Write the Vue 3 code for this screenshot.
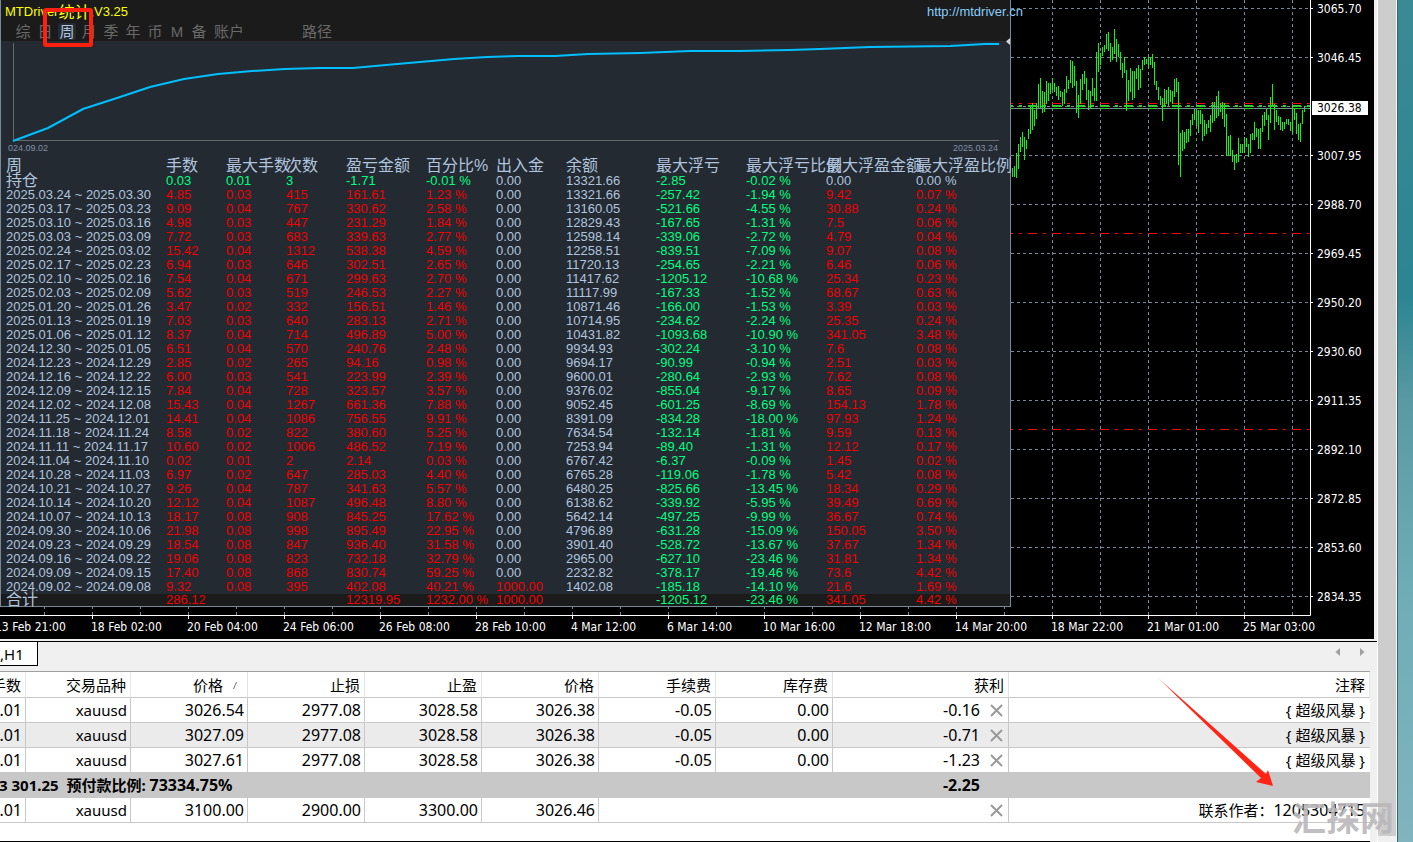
<script setup>
const periods = [
  { key: 'all', label: '综' },
  { key: 'day', label: '日' },
  { key: 'week', label: '周', active: true },
  { key: 'month', label: '月' },
  { key: 'season', label: '季' },
  { key: 'year', label: '年' },
  { key: 'symbol', label: '币' },
  { key: 'magic', label: 'M' },
  { key: 'note', label: '备' },
  { key: 'account', label: '账户', wide: true },
  { key: 'path', label: '路径', wide: true, apart: true },
]

const statHeads = ['周', '手数', '最大手数', '次数', '盈亏金额', '百分比%', '出入金', '余额', '最大浮亏', '最大浮亏比例', '最大浮盈金额', '最大浮盈比例']

const rawStats = `2025.03.24 ~ 2025.03.30|4.85|0.03|415|161.61|1.23 %|0.00|13321.66|-257.42|-1.94 %|9.42|0.07 %
2025.03.17 ~ 2025.03.23|9.09|0.04|767|330.62|2.58 %|0.00|13160.05|-521.66|-4.55 %|30.88|0.24 %
2025.03.10 ~ 2025.03.16|4.98|0.03|447|231.29|1.84 %|0.00|12829.43|-167.65|-1.31 %|7.5|0.06 %
2025.03.03 ~ 2025.03.09|7.72|0.03|683|339.63|2.77 %|0.00|12598.14|-339.06|-2.72 %|4.79|0.04 %
2025.02.24 ~ 2025.03.02|15.42|0.04|1312|538.38|4.59 %|0.00|12258.51|-839.51|-7.09 %|9.07|0.08 %
2025.02.17 ~ 2025.02.23|6.94|0.03|646|302.51|2.65 %|0.00|11720.13|-254.65|-2.21 %|6.46|0.06 %
2025.02.10 ~ 2025.02.16|7.54|0.04|671|299.63|2.70 %|0.00|11417.62|-1205.12|-10.68 %|25.34|0.23 %
2025.02.03 ~ 2025.02.09|5.62|0.03|519|246.53|2.27 %|0.00|11117.99|-167.33|-1.52 %|68.67|0.63 %
2025.01.20 ~ 2025.01.26|3.47|0.02|332|156.51|1.46 %|0.00|10871.46|-166.00|-1.53 %|3.39|0.03 %
2025.01.13 ~ 2025.01.19|7.03|0.03|640|283.13|2.71 %|0.00|10714.95|-234.62|-2.24 %|25.35|0.24 %
2025.01.06 ~ 2025.01.12|8.37|0.04|714|496.89|5.00 %|0.00|10431.82|-1093.68|-10.90 %|341.05|3.48 %
2024.12.30 ~ 2025.01.05|6.51|0.04|570|240.76|2.48 %|0.00|9934.93|-302.24|-3.10 %|7.6|0.08 %
2024.12.23 ~ 2024.12.29|2.85|0.02|265|94.16|0.98 %|0.00|9694.17|-90.99|-0.94 %|2.51|0.03 %
2024.12.16 ~ 2024.12.22|6.00|0.03|541|223.99|2.39 %|0.00|9600.01|-280.64|-2.93 %|7.62|0.08 %
2024.12.09 ~ 2024.12.15|7.84|0.04|728|323.57|3.57 %|0.00|9376.02|-855.04|-9.17 %|8.65|0.09 %
2024.12.02 ~ 2024.12.08|15.43|0.04|1267|661.36|7.88 %|0.00|9052.45|-601.25|-8.69 %|154.13|1.78 %
2024.11.25 ~ 2024.12.01|14.41|0.04|1086|756.55|9.91 %|0.00|8391.09|-834.28|-18.00 %|97.93|1.24 %
2024.11.18 ~ 2024.11.24|8.58|0.02|822|380.60|5.25 %|0.00|7634.54|-132.14|-1.81 %|9.59|0.13 %
2024.11.11 ~ 2024.11.17|10.60|0.02|1006|486.52|7.19 %|0.00|7253.94|-89.40|-1.31 %|12.12|0.17 %
2024.11.04 ~ 2024.11.10|0.02|0.01|2|2.14|0.03 %|0.00|6767.42|-6.37|-0.09 %|1.45|0.02 %
2024.10.28 ~ 2024.11.03|6.97|0.02|647|285.03|4.40 %|0.00|6765.28|-119.06|-1.78 %|5.42|0.08 %
2024.10.21 ~ 2024.10.27|9.26|0.04|787|341.63|5.57 %|0.00|6480.25|-825.66|-13.45 %|18.34|0.29 %
2024.10.14 ~ 2024.10.20|12.12|0.04|1087|496.48|8.80 %|0.00|6138.62|-339.92|-5.95 %|39.49|0.69 %
2024.10.07 ~ 2024.10.13|18.17|0.08|908|845.25|17.62 %|0.00|5642.14|-497.25|-9.99 %|36.67|0.74 %
2024.09.30 ~ 2024.10.06|21.98|0.08|998|895.49|22.95 %|0.00|4796.89|-631.28|-15.09 %|150.05|3.50 %
2024.09.23 ~ 2024.09.29|18.54|0.08|847|936.40|31.58 %|0.00|3901.40|-528.72|-13.67 %|37.67|1.34 %
2024.09.16 ~ 2024.09.22|19.06|0.08|823|732.18|32.79 %|0.00|2965.00|-627.10|-23.46 %|31.81|1.34 %
2024.09.09 ~ 2024.09.15|17.40|0.08|868|830.74|59.25 %|0.00|2232.82|-378.17|-19.46 %|73.6|4.42 %
2024.09.02 ~ 2024.09.08|9.32|0.08|395|402.08|40.21 %|1000.00|1402.08|-185.18|-14.10 %|21.6|1.69 %`
const stats = rawStats.split('\n').map((line) => line.split('|'))
const holding = ['持仓', '0.03', '0.01', '3', '-1.71', '-0.01 %', '0.00', '13321.66', '-2.85', '-0.02 %', '0.00', '0.00 %']
const totals = ['合计', '286.12', '', '', '12319.95', '1232.00 %', '1000.00', '', '-1205.12', '-23.46 %', '341.05', '4.42 %']

function tone(col, value) {
  if (col === 0 || col === 7) return 'plain'
  if (col === 6) return value === '0.00' ? 'plain' : 'gain'
  return value.startsWith('-') ? 'loss' : 'gain'
}
function holdingTone(col) {
  return [0, 6, 7, 10, 11].includes(col) ? 'plain' : 'loss'
}

const equity = '13,141 48,128 83,109 117,98 150,87 184,79 218,74 252,71 285,69 319,68 353,68 386,65 420,62 454,59 487,57 520,56 555,56 588,54 640,53 690,51 740,51 790,50 820,49 870,47 950,46 985,44 999,44'

// Top and bottom of each bar, in thirds of a pixel from the top of the plot
const bars = [
  504,531,497,531,459,534,431,507,410,455,396,441,411,480,420,447,386,417,315,402,310,390,330,378,309,357,252,326,234,326,273,339,
  276,336,243,312,249,303,249,282,233,270,249,276,261,288,258,300,273,290,276,318,267,312,228,280,240,267,180,250,183,264,198,258,
  243,339,286,354,237,312,222,270,213,252,234,300,270,330,273,324,234,288,264,303,156,303,129,216,159,195,141,168,135,156,102,147,
  96,153,129,186,141,180,87,162,117,186,132,171,156,210,189,234,171,219,210,333,240,303,204,276,213,300,213,294,204,237,195,270,
  207,264,180,210,171,195,177,192,171,204,171,195,162,204,186,255,243,270,261,300,288,315,294,363,267,318,270,312,261,318,270,306,
  273,312,237,291,234,276,246,495,399,531,390,453,396,447,387,429,387,426,360,408,342,375,327,360,330,378,330,399,330,372,342,423,
  360,408,372,402,360,384,345,396,306,369,306,363,288,354,273,348,309,336,306,357,309,381,342,468,408,468,405,468,450,486,465,510,
  462,489,414,486,432,459,432,459,411,459,414,441,432,471,402,459,399,420,366,420,384,411,387,447,384,447,345,396,336,378,324,360,
  345,420,291,369,252,315,312,390,330,366,348,375,351,390,366,393,366,387,357,372,357,375,366,393,318,402,324,360,339,402,372,420,
  369,426,330,372,318,336,
]
let barPath = ''
for (let i = 0; i < bars.length; i += 2) {
  barPath += `M${1012.5 + i} ${Math.round(bars[i] / 3)}V${Math.round(bars[i + 1] / 3)}`
}

const gridX = Array.from({ length: 27 }, (_, i) => 44.5 + 48 * i)
const tickX = Array.from({ length: 13 }, (_, i) => 92.5 + 96 * i)
const gridY = Array.from({ length: 13 }, (_, i) => 8.5 + 49 * i)
const prices = ['3065.70', '3046.45', '', '3007.95', '2988.70', '2969.45', '2950.20', '2930.60', '2911.35', '2892.10', '2872.85', '2853.60', '2834.35']
const times = ['13 Feb 21:00', '18 Feb 02:00', '20 Feb 04:00', '24 Feb 06:00', '26 Feb 08:00', '28 Feb 10:00', '4 Mar 12:00', '6 Mar 14:00', '10 Mar 16:00', '12 Mar 18:00', '14 Mar 20:00', '18 Mar 22:00', '21 Mar 01:00', '25 Mar 03:00']

const orderHeads = ['手数', '交易品种', '价格', '止损', '止盈', '价格', '手续费', '库存费', '获利', '注释']
const orders = [
  ['0.01', 'xauusd', '3026.54', '2977.08', '3028.58', '3026.38', '-0.05', '0.00', '-0.16', '{ 超级风暴 }'],
  ['0.01', 'xauusd', '3027.09', '2977.08', '3028.58', '3026.38', '-0.05', '0.00', '-0.71', '{ 超级风暴 }'],
  ['0.01', 'xauusd', '3027.61', '2977.08', '3028.58', '3026.38', '-0.05', '0.00', '-1.23', '{ 超级风暴 }'],
]
</script>

<template>
  <div class="screen">
    <main class="terminal">
      <section class="chart">
        <div class="plot">
          <svg class="price-plot" width="1311" height="619" aria-hidden="true">
            <g class="grid">
              <line v-for="x in gridX" :key="'x' + x" :x1="x" :x2="x" y1="0" y2="615" />
              <line v-for="y in gridY" :key="'y' + y" x1="1011" x2="1310" :y1="y" :y2="y" />
            </g>
            <g class="stops">
              <path d="M1004 103.5H1310M1004 233.5H1310M1004 429.5H1310" />
            </g>
            <path class="bars" :d="barPath" />
            <path class="bid" d="M1011 108.5H1310" />
            <path class="entries wide" d="M1004 106H1310" />
            <path class="entries" d="M1004 108.5H1310" />
            <path class="frame" d="M0 615.5H1310.5V0" />
            <line v-for="x in tickX" :key="'t' + x" class="frame" :x1="x" :x2="x" y1="616" y2="619" />
          </svg>

          <section class="panel">
            <header class="panel-head">
              <div class="title-row">
                <h1>MTDriver<span class="cjk">统计</span>,V3.25</h1>
                <a href="#site">http://mtdriver.cn</a>
              </div>
              <nav>
                <button v-for="p in periods" :key="p.key" type="button" :class="{ active: p.active, wide: p.wide, apart: p.apart }">{{ p.label }}</button>
              </nav>
              <svg class="fold" width="4" height="7" viewBox="0 0 4 7" aria-hidden="true"><path d="M4 0V7L0 3.500z" fill="#d4d4d4" /></svg>
            </header>
            <svg class="equity" viewBox="0 41 1009 101" preserveAspectRatio="none" aria-hidden="true">
              <path d="M12.500 43V140.500H998" stroke="#696969" fill="none" />
              <polyline :points="equity" transform="translate(-1 0)" stroke="#00bfff" stroke-width="2" fill="none" />
            </svg>
            <div class="range"><span>024.09.02</span><span>2025.03.24</span></div>
            <table class="stats">
              <colgroup>
                <col class="w165" /><col class="w60" /><col class="w60" /><col class="w60" /><col class="w80" /><col class="w70" />
                <col class="w70" /><col class="w90" /><col class="w90" /><col class="w80" /><col class="w90" /><col />
              </colgroup>
              <thead>
                <tr><th v-for="h in statHeads" :key="h" scope="col">{{ h }}</th></tr>
              </thead>
              <tbody>
                <tr class="holding"><td v-for="(v, c) in holding" :key="c" :class="holdingTone(c)">{{ v }}</td></tr>
                <tr v-for="row in stats" :key="row[0]">
                  <td v-for="(v, c) in row" :key="c" :class="tone(c, v)">{{ v }}</td>
                </tr>
              </tbody>
              <tfoot>
                <tr><td v-for="(v, c) in totals" :key="c" :class="tone(c, v)">{{ v }}</td></tr>
              </tfoot>
            </table>
          </section>
          <div class="focus-mark"></div>
        </div>
        <aside class="price-axis">
          <span v-for="(p, i) in prices" :key="i" class="price" :class="{ tick: p }">{{ p }}</span>
          <strong>3026.38</strong>
        </aside>
        <div class="time-axis"><span v-for="t in times" :key="t">{{ t }}</span></div>
      </section>

      <div class="tabs">
        <button type="button" class="tab">,H1</button>
        <div class="scrollers">
          <button type="button" aria-label="向左"><svg width="6" height="8" viewBox="0 0 6 8"><path d="M5 0V8L0.500 4z" fill="#a0a0a0" /></svg></button>
          <button type="button" aria-label="向右"><svg width="6" height="8" viewBox="0 0 6 8"><path d="M1 0V8L5.500 4z" fill="#a0a0a0" /></svg></button>
        </div>
      </div>

      <section class="orders">
        <table>
          <colgroup>
            <col class="c-lots" /><col class="c-symbol" /><col class="c-num" /><col class="c-num" /><col class="c-num" />
            <col class="c-num" /><col class="c-num" /><col class="c-num" /><col class="c-profit" /><col />
          </colgroup>
          <thead>
            <tr>
              <th v-for="(h, i) in orderHeads" :key="i" scope="col">{{ h }}<svg v-if="i === 2" class="sort" width="6" height="10" viewBox="0 0 6 10" aria-hidden="true"><path d="M1.500 8L4.500 1" stroke="#777" fill="none" /></svg></th>
            </tr>
          </thead>
          <tbody>
            <tr v-for="(o, r) in orders" :key="o[2]" :class="{ alt: r === 1 }">
              <td v-for="(v, c) in o" :key="c" :class="{ num: c !== 1 && c !== 9, note: c === 9 }">
                <div v-if="c === 8" class="profit">
                  {{ v }}
                  <button type="button" aria-label="平仓"><svg width="13" height="13" viewBox="0 0 13 13"><path d="M1 1L12 12M12 1L1 12" stroke="#999" stroke-width="2" /></svg></button>
                </div>
                <template v-else>{{ v }}</template>
              </td>
            </tr>
            <tr class="summary">
              <td colspan="8">3 301.25&nbsp; 预付款比例: <span class="figure">73334.75%</span></td>
              <td class="sum figure">-2.25</td>
              <td></td>
            </tr>
            <tr>
              <td class="num">0.01</td>
              <td>xauusd</td>
              <td class="num">3100.00</td>
              <td class="num">2900.00</td>
              <td class="num">3300.00</td>
              <td class="num">3026.46</td>
              <td colspan="3">
                <div class="profit">
                  <button type="button" aria-label="删除"><svg width="13" height="13" viewBox="0 0 13 13"><path d="M1 1L12 12M12 1L1 12" stroke="#999" stroke-width="2" /></svg></button>
                </div>
              </td>
              <td class="note">联系作者：<span class="figure">1205304715</span></td>
            </tr>
          </tbody>
        </table>
      </section>
      <svg class="arrow" width="120" height="113" viewBox="0 0 120 113" aria-hidden="true">
        <defs>
          <linearGradient id="fade" x1="0" y1="0" x2="1" y2="1">
            <stop offset="0" stop-color="#ff2414" stop-opacity="0.2" />
            <stop offset="0.15" stop-color="#ff2414" />
          </linearGradient>
        </defs>
        <path d="M0 0L110 98L112 94L117 110L100 106L105 102z" fill="url(#fade)" />
      </svg>
    </main>
    <div class="gutter"><div class="thumb"></div></div>
    <div class="desktop"></div>
    <div class="watermark">汇探网</div>
  </div>
</template>

<style>
body {
  margin: 0;
  overflow: hidden;
}
</style>

<style scoped>
* {
  box-sizing: border-box;
}
button {
  appearance: none;
  border: 0;
  padding: 0;
  margin: 0;
  background: none;
  font: inherit;
  color: inherit;
}
.screen {
  position: relative;
  display: grid;
  grid-template-columns: minmax(0, 1fr) 20px 16px;
  min-height: 100vh;
  background: #f0f0f0;
  font-family: "Noto Sans", "Noto Sans CJK SC", sans-serif;
}
.terminal {
  position: relative;
  display: flex;
  flex-direction: column;
  min-width: 0;
  overflow: hidden;
}

/* price chart */
.chart {
  display: grid;
  grid-template-columns: minmax(0, 1fr) 63px;
  grid-template-rows: 616px 23px;
  margin-right: 3px;
  background: #000;
  color: #fff;
  font-size: 12px;
  font-family: "DejaVu Sans Condensed", "Noto Sans", sans-serif;
  overflow: hidden;
}
.plot {
  position: relative;
}
.price-plot {
  position: absolute;
  top: 0;
  right: 0;
  overflow: visible;
}
.grid line {
  stroke: #778899;
  stroke-dasharray: 3 3;
}
.stops path {
  stroke: #ff0000;
  stroke-dasharray: 9 6 3 6;
}
.entries {
  stroke: #32cd32;
  stroke-dasharray: 9 6 3 6;
}
.entries.wide {
  stroke-width: 2;
}
.bid {
  stroke: #778899;
}
.bars {
  stroke: #00ff00;
}
.frame {
  stroke: #fff;
  fill: none;
}
.price-axis {
  position: relative;
  margin-top: -16px;
}
.price {
  position: relative;
  display: block;
  height: 49px;
  padding-left: 6px;
  line-height: 50px;
}
.tick::before {
  content: "";
  position: absolute;
  left: 0;
  top: 24px;
  width: 2px;
  height: 1px;
  background: #fff;
}
.price-axis strong {
  position: absolute;
  left: 1px;
  top: 117px;
  width: 56px;
  height: 14px;
  padding-left: 5px;
  background: #fff;
  color: #000;
  font-weight: 400;
  line-height: 15px;
}
.time-axis {
  grid-column: 1 / -1;
  display: flex;
  margin-left: -5px;
  line-height: 22px;
  white-space: nowrap;
}
.time-axis span {
  flex: 0 0 96px;
}

/* statistics panel */
.panel {
  position: relative;
  width: calc(100% - 300px);
  height: 607px;
  border: 1px solid #778899;
  border-top: 0;
  background: #242a32;
  color: #b0c4de;
  font-family: "Liberation Sans", "Noto Sans CJK SC", sans-serif;
  font-size: 13px;
}
.panel-head {
  position: relative;
  height: 41px;
  background: #1b1b1b;
}
.title-row {
  display: flex;
  justify-content: space-between;
  height: 23px;
  margin-right: -13px;
  padding-left: 4px;
  line-height: 23px;
}
h1 {
  margin: 0;
  color: #ffff00;
  font-size: 13px;
  font-weight: 400;
}
.cjk {
  font-size: 16px;
  line-height: 16px;
  vertical-align: -2px;
}
.title-row a {
  color: #87cefa;
  text-decoration: none;
}
nav {
  display: flex;
  padding-left: 11px;
  color: #696969;
  font-size: 15px;
}
nav button {
  width: 22px;
  height: 17px;
  line-height: 17px;
  text-align: center;
}
nav .wide {
  width: 38px;
}
nav .apart {
  margin-left: 50px;
}
nav .active {
  width: 18px;
  margin: 0 2px;
  border-radius: 2px;
  background: #242a32;
  color: #b0c4de;
}
.fold {
  position: absolute;
  right: 0;
  bottom: -4px;
}
.equity {
  display: block;
  width: 100%;
  height: 101px;
}
.range {
  display: flex;
  justify-content: space-between;
  height: 15px;
  padding: 0 12px 0 7px;
  color: #8090a4;
  font-size: 9px;
  line-height: 12px;
}
.stats {
  width: 100%;
  table-layout: fixed;
  border-collapse: collapse;
  line-height: 14px;
  white-space: nowrap;
}
.stats th,
.stats td {
  padding: 0;
  height: 14px;
  text-align: left;
}
.stats th {
  height: 17px;
  font-size: 16px;
  font-weight: 400;
}
.stats .holding td {
  height: 13px;
}
.stats th:first-child,
.stats td:first-child {
  padding-left: 5px;
}
.stats .holding td:first-child,
.stats tfoot td:first-child {
  font-size: 16px;
}
.stats tfoot tr {
  background: #1b1b1b;
}
.stats tfoot td {
  height: 12px;
  line-height: 12px;
}
.w165 { width: 165px; }
.w60 { width: 60px; }
.w70 { width: 70px; }
.w80 { width: 80px; }
.w90 { width: 90px; }
.gain { color: #f00000; }
.loss { color: #00ff7f; }
.focus-mark {
  position: absolute;
  left: 43px;
  top: 8px;
  width: 50px;
  height: 39px;
  border: 4px solid #ff2010;
  border-radius: 3px;
}

/* chart tabs */
.tabs {
  display: flex;
  justify-content: space-between;
  height: 30px;
  margin-top: 2px;
  border-top: 1px solid #000;
  border-bottom: 4px solid #f0f0f0;
}
.tab {
  width: 38px;
  height: 24px;
  border-right: 1px solid #000;
  border-bottom: 1px solid #000;
  background: #fff;
  font-size: 15px;
  line-height: 22px;
  text-align: left;
}
.scrollers {
  display: flex;
  gap: 18px;
  height: 20px;
  padding-right: 12px;
}
.scrollers button {
  display: flex;
  align-items: center;
}

/* order list */
.orders {
  flex: 1;
  margin-right: 7px;
  border-top: 1px solid #a0a0a0;
  border-bottom: 1px solid #000;
  background: #fff;
  color: #000;
  font-size: 15px;
  overflow: hidden;
}
.orders table {
  width: calc(100% + 30px);
  margin-left: -30px;
  table-layout: fixed;
  border-collapse: separate;
  border-spacing: 0;
  line-height: 20px;
  white-space: nowrap;
}
.orders th,
.orders td {
  height: 25px;
  padding: 0 3px 0 0;
  border-right: 1px solid #c8c8c8;
  border-bottom: 1px solid #c8c8c8;
  text-align: right;
}
.orders th {
  height: 26px;
  padding-right: 4px;
  border-right-color: #e4e4e4;
  font-weight: 400;
}
.orders .num {
  font-size: 16px;
}
.figure {
  font-size: 16px;
}
.orders .note {
  padding-right: 5px;
}
.orders td:last-child {
  border-right: 0;
}
.sort {
  margin: 0 5px 0 9px;
}
.alt {
  background: #ebebeb;
}
.profit {
  display: flex;
  align-items: center;
  justify-content: flex-end;
  gap: 10px;
  padding-right: 2px;
}
.profit button {
  display: flex;
}
.orders .summary td {
  border-right: 0;
  border-color: #c8c8c8;
  background: #c8c8c8;
  font-weight: 700;
}
.orders .summary td:first-child {
  padding-left: 29px;
  text-align: left;
}
.orders .summary .sum {
  padding-right: 29px;
}
.c-lots { width: 56px; }
.c-symbol { width: 105px; }
.c-num { width: 117px; }
.c-profit { width: 176px; }

.arrow {
  position: absolute;
  right: 101px;
  top: 676px;
}

/* window edge and desktop */
.gutter {
  border-left: 1px solid #fff;
  border-right: 1px solid #f8f8f8;
  padding-bottom: 6px;
  display: flex;
}
.thumb {
  flex: 1;
  background: #cdcdcd;
}
.desktop {
  border-left: 1px solid #3a6268;
  background: linear-gradient(#3a8a95, #2b8592 35%, #5a9aa4 48%, #6fadb6 70%, #80b4bf);
}
.watermark {
  position: absolute;
  right: 19px;
  bottom: 6px;
  color: rgba(186, 184, 186, 0.92);
  font-family: "Noto Sans CJK SC", sans-serif;
  font-size: 34px;
  font-weight: 700;
  line-height: 38px;
}
</style>
